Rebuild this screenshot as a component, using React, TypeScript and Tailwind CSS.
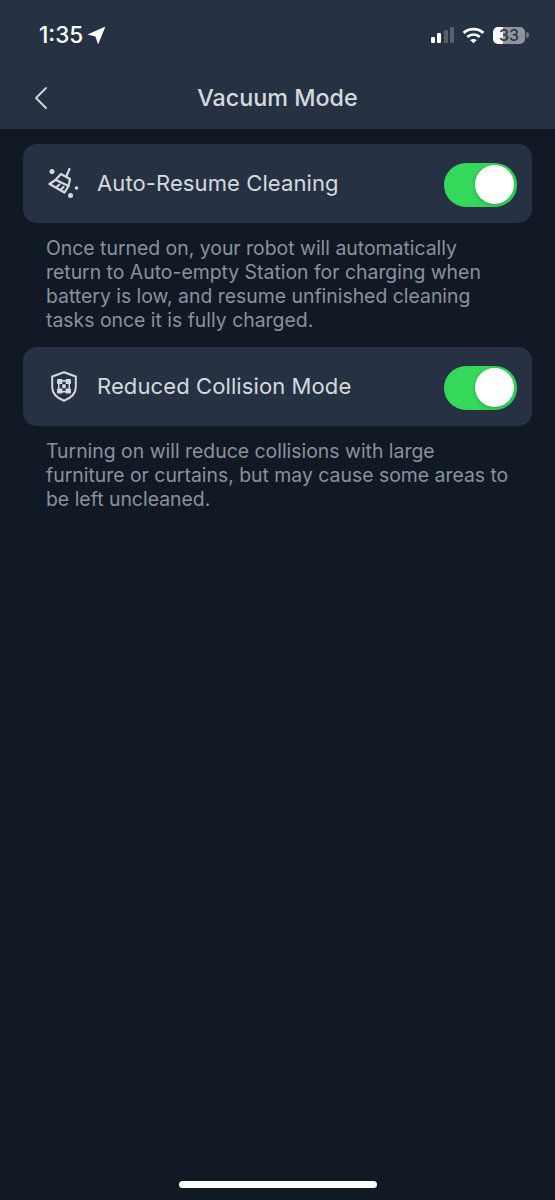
function Toggle() {
  return (
    <div className="mt-[2px] flex h-[44px] w-[73px] items-center justify-end rounded-full bg-[#34d95c] pr-[3px]">
      <div className="h-[39px] w-[39px] rounded-full bg-white shadow-[0_1px_4px_rgba(0,0,0,0.25)]" />
    </div>
  );
}

function BroomIcon() {
  return (
    <svg viewBox="0 0 34 34" className="h-[34px] w-[34px]" fill="none" stroke="#d5d9de" strokeWidth="2.200" strokeLinejoin="round" strokeLinecap="round">
      <circle cx="5" cy="4.500" r="2.500" fill="#d5d9de" stroke="none" />
      <circle cx="29.500" cy="21" r="1.800" fill="#d5d9de" stroke="none" />
      <circle cx="23.500" cy="28.500" r="2.500" fill="#d5d9de" stroke="none" />
      <path d="M22.500 2 19.500 9" />
      <path d="M14 7 23 12 21.500 19 17.500 25.500 2.500 17 8.500 13 Z" />
      <path d="M9 13 21.500 19M12.500 17.500 9.500 20M16.500 20 13.500 23" />
    </svg>
  );
}

function ShieldIcon() {
  return (
    <svg viewBox="0 0 26 31" className="h-[31px] w-[26px]" fill="none" stroke="#d5d9de" strokeWidth="2" strokeLinejoin="round">
      <path d="M13 1.200 24.800 5.500v10.500c0 6.500-4.800 11-11.800 13.800C6 27 1.200 22.500 1.200 16V5.500Z" />
      <g fill="#d5d9de" stroke="none">
        <rect x="6" y="8" width="5.500" height="5" rx="1" />
        <rect x="14.500" y="8" width="5.500" height="5" rx="1" />
        <rect x="6" y="17.500" width="5.500" height="5" rx="1" />
        <rect x="14.500" y="17.500" width="5.500" height="5" rx="1" />
        <rect x="11" y="9" width="4" height="1.500" />
        <rect x="11" y="20" width="4" height="1.500" />
        <rect x="7" y="12.500" width="1.500" height="5.500" />
        <rect x="17.500" y="12.500" width="1.500" height="5.500" />
        <rect x="11.200" y="13.300" width="3.600" height="3.900" rx="0.800" />
      </g>
    </svg>
  );
}

function SettingRow({ icon, label }: { icon: React.ReactNode; label: string }) {
  return (
    <div className="flex h-[79px] items-center rounded-[14px] bg-[#263244] pl-[22px] pr-[15px]">
      <div className="flex w-[37px] justify-center">{icon}</div>
      <span className="ml-[15px] flex-1 text-[22px] tracking-[0.1px] text-[#d5d9de]">{label}</span>
      <Toggle />
    </div>
  );
}

export default function App() {
  return (
    <div className="relative flex h-[1200px] w-[555px] flex-col bg-[#111925] font-['Inter',sans-serif]">
      <header className="h-[129px] bg-[#263244]">
        <div className="flex h-[70px] items-center justify-between pl-[39px] pr-[26px]">
          <div className="flex items-center gap-[4px] text-white">
            <span className="text-[22.500px] font-medium">1:35</span>
            <svg viewBox="0 0 18 18" className="h-[19px] w-[19px]" fill="white">
              <path d="M17.500 .5 10.500 17.500 8 10 .5 8Z" />
            </svg>
          </div>
          <div className="flex items-center gap-[8px]">
            <div className="flex items-end gap-[2.500px]">
              <div className="h-[6px] w-[4px] rounded-[1px] bg-white" />
              <div className="h-[10px] w-[4px] rounded-[1px] bg-white" />
              <div className="h-[13px] w-[4px] rounded-[1px] bg-[#566170]" />
              <div className="h-[16px] w-[4px] rounded-[1px] bg-[#566170]" />
            </div>
            <svg viewBox="0 0 22 16" className="h-[17px] w-[23px]" fill="none" stroke="white" strokeWidth="2.600">
              <path d="M1.500 5.500C7 .8 15 .8 20.500 5.500" />
              <path d="M5 9.300c3.600-3 8.400-3 12 0" />
              <path d="M11 15.500 7.800 12.300c2-1.400 4.400-1.400 6.400 0Z" fill="white" stroke="none" />
            </svg>
            <div className="flex items-center gap-[1px]">
              <div className="flex h-[17px] w-[32px] items-center justify-center rounded-[5px] bg-[linear-gradient(90deg,#ffffff_0_31%,#8f959d_31%)] text-[16px] font-medium leading-none text-[#2c3644]">
                33
              </div>
              <div className="h-[6px] w-[3px] rounded-r-full bg-[#6f7885]" />
            </div>
          </div>
        </div>
        <div className="relative flex h-[59px] items-center justify-center pb-[3px]">
          <svg viewBox="0 0 14 24" className="absolute left-[34px] top-[16px] h-[24px] w-[14px]" fill="none" stroke="#d5d9de" strokeWidth="1.800" strokeLinecap="round" strokeLinejoin="round">
            <path d="M12 2 2 12l10 10" />
          </svg>
          <h1 className="text-[23.300px] font-medium text-[#d5d9de]">Vacuum Mode</h1>
        </div>
      </header>

      <main className="px-[23px] pt-[15px]">
        <SettingRow icon={<BroomIcon />} label="Auto-Resume Cleaning" />
        <p className="mb-[15px] pl-[23px] pr-[20px] pt-[13px] text-[19.400px] leading-[24px] text-[#8b929b]">
          Once turned on, your robot will automatically return to Auto-empty Station for charging when battery is low, and resume unfinished cleaning tasks once it is fully charged.
        </p>
        <SettingRow icon={<ShieldIcon />} label="Reduced Collision Mode" />
        <p className="pl-[23px] pr-[20px] pt-[13px] text-[19.400px] leading-[24px] text-[#8b929b]">
          Turning on will reduce collisions with large furniture or curtains, but may cause some areas to be left uncleaned.
        </p>
      </main>

      <div className="absolute bottom-[12px] left-[179px] h-[7px] w-[198px] rounded-full bg-white" />
    </div>
  );
}
